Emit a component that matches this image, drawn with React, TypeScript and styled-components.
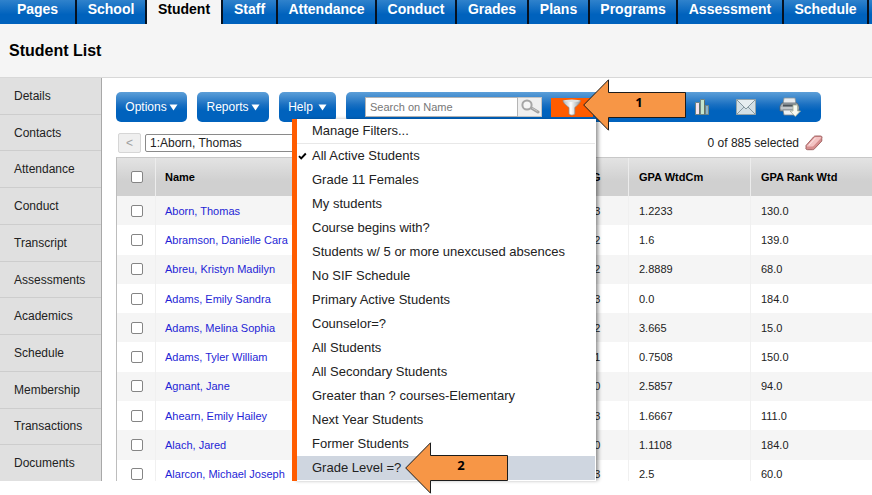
import React from "react";
import styled, { createGlobalStyle } from "styled-components";

const GlobalStyle = createGlobalStyle`
  *, *::before, *::after { box-sizing: border-box; }
  body {
    margin: 0;
    background: #fff;
    color: #222;
    font-family: "Liberation Sans", Arial, sans-serif;
    font-size: 12px;
  }
  button, input, select { font: inherit; }
`;

const blue = "linear-gradient(#5d9fd8 0%, #1a70c2 42%, #0062bd 62%, #0062bd 100%)";

const Page = styled.div`
  display: flex;
  flex-direction: column;
  height: 100vh;
  padding-bottom: 14px;
  overflow: hidden;
`;

const TabBar = styled.nav`
  display: flex;
  flex: none;
  height: 24px;
  background: linear-gradient(#2f82cc 0%, #0062bd 60%);
  overflow: hidden;
`;

const Tab = styled.a<{ $width: number; $active?: boolean }>`
  flex: 0 0 ${(p) => p.$width}px;
  height: 24px;
  padding-bottom: 6px;
  line-height: 18px;
  border-right: 2px solid #06111f;
  background: ${(p) => (p.$active ? "#f5f5f5" : "transparent")};
  color: ${(p) => (p.$active ? "#000" : "#fff")};
  font-size: 14px;
  font-weight: bold;
  text-align: center;
  text-decoration: none;
`;

const TitleBar = styled.header`
  display: flex;
  flex: none;
  align-items: center;
  height: 54px;
  padding: 0 9px;
  background: #f5f5f5;
  border-bottom: 1px solid #d8d8d8;
`;

const Title = styled.h1`
  margin: 0;
  color: #000;
  font-size: 16px;
  line-height: 20px;
`;

const Main = styled.div`
  display: flex;
  flex: 1;
  min-height: 0;
`;

const SideNav = styled.nav`
  display: flex;
  flex: none;
  flex-direction: column;
  width: 102px;
  background: #e0e0e0;
  border-right: 1px solid #a8a8a8;
`;

const SideLink = styled.a`
  display: flex;
  flex: 1;
  align-items: center;
  padding-left: 14px;
  border-bottom: 1px solid #cdcdcd;
  color: #222;
  text-decoration: none;
  &:last-child { border-bottom: 0; }
`;

const Content = styled.main`
  display: flex;
  flex: 1;
  flex-direction: column;
  min-width: 0;
  padding: 14px 0 0 14px;
`;

const Toolbar = styled.div`
  display: flex;
  flex: none;
  gap: 10px;
  padding-right: 51px;
`;

const MenuButton = styled.button<{ $width: number; $gap?: number }>`
  display: flex;
  flex: 0 0 ${(p) => p.$width}px;
  align-items: center;
  justify-content: center;
  gap: ${(p) => p.$gap ?? 2}px;
  height: 30px;
  padding: 0;
  border: 0;
  border-radius: 5px;
  background: ${blue};
  color: #fff;
`;

const ToolStrip = styled.div`
  position: relative;
  display: flex;
  flex: 1;
  align-items: center;
  height: 30px;
  padding-left: 19px;
  border-radius: 5px;
  background: ${blue};
`;

const SearchInput = styled.input`
  width: 153px;
  height: 20px;
  padding: 0 4px;
  border: 1px solid #b5b5b5;
  border-radius: 0;
  background: #fff;
  font-size: 11px;
  &::placeholder { color: #777; opacity: 1; }
`;

const SearchButton = styled.button`
  width: 24px;
  height: 20px;
  padding: 0;
  border: 1px solid #c4c4c4;
  border-left: 0;
  background: #efefef;
  line-height: 0;
`;

const FilterButton = styled.button`
  width: 42px;
  height: 19px;
  margin-left: 9px;
  padding: 0;
  border: 0;
  background: #ff5c00;
  line-height: 0;
`;

const ToolIcons = styled.div`
  display: flex;
  align-items: center;
  gap: 22px;
  margin-left: 98px;
`;

const IconButton = styled.button`
  width: 22px;
  height: 22px;
  padding: 0;
  border: 0;
  background: none;
  line-height: 0;
`;

const Menu = styled.ul`
  position: absolute;
  top: 27px;
  left: -54px;
  z-index: 2;
  width: 304px;
  margin: 0;
  padding: 0 1px 1px 0;
  border-left: 5px solid #ff5c00;
  background: #fff;
  box-shadow: 3px 0 4px -1px rgba(0, 0, 0, 0.45);
  list-style: none;
`;

const MenuRow = styled.li<{ $divided?: boolean; $hover?: boolean }>`
  position: relative;
  height: ${(p) => (p.$divided ? 25 : 24)}px;
  border-bottom: ${(p) => (p.$divided ? "1px solid #e8e8e8" : "0")};
  background: ${(p) => (p.$hover ? "#cfd6e0" : "transparent")};
`;

const MenuItem = styled.button`
  display: flex;
  align-items: center;
  width: 100%;
  height: 24px;
  padding: 0 0 1px;
  border: 0;
  background: none;
  color: #222;
  font-size: 13px;
  text-align: left;
`;

const Tick = styled.span`
  flex: 0 0 15px;
  padding-left: 1px;
  line-height: 0;
`;

const Callout = styled.div<{ $left: number; $top: number }>`
  position: absolute;
  top: ${(p) => p.$top}px;
  left: ${(p) => p.$left}px;
  z-index: 3;
  display: grid;
  width: 104px;
  height: 52px;
  pointer-events: none;
  > * { grid-area: 1 / 1; }
`;

const CalloutText = styled.span`
  padding-left: 8px;
  color: #000;
  font-family: "Open Sans", "Noto Sans", sans-serif;
  font-size: 13px;
  font-weight: bold;
  line-height: 46px;
  text-align: center;
`;

const PickerRow = styled.div`
  display: flex;
  flex: none;
  align-items: center;
  height: 22px;
  margin: 10px 0 3px;
  padding: 0 49px 0 2px;
`;

const PrevButton = styled.button`
  width: 23px;
  height: 20px;
  margin-right: 4px;
  padding: 0;
  border: 1px solid #d6d6d6;
  border-radius: 2px;
  background: #efefef;
  color: #a0a0a0;
`;

const StudentSelect = styled.select`
  width: 260px;
  height: 18px;
  padding: 0 4px;
  border: 1px solid #8a8a8a;
  border-radius: 2px;
  background: #fff;
  color: #222;
  appearance: none;
`;

const Selected = styled.span`
  margin-left: auto;
  margin-right: 6px;
`;

const TableWrap = styled.div`
  flex: 1;
  min-height: 0;
  overflow: hidden;
`;

const Table = styled.table`
  width: 100%;
  height: 332px;
  border-top: 1px solid #c8c8c8;
  border-left: 1px solid #bdbdbd;
  border-spacing: 0;
  table-layout: fixed;
  font-size: 11px;

  th, td { padding: 0 0 0 10px; text-align: left; }
  th {
    height: 38px;
    border-right: 1px solid #ececec;
    background: linear-gradient(#e3e3e3, #d0d0d0 60%);
    color: #000;
  }
  td { height: 29px; border-right: 1px solid #f0f0f0; }
  tbody tr:nth-child(odd) { background: #f5f5f5; }
  th:first-child, td:first-child { padding: 0 0 0 2px; text-align: center; }
  th:nth-child(2), td:nth-child(2) { padding-left: 9px; }
  th:last-child, td:last-child { border-right: 0; }
`;

const Check = styled.input`
  display: block;
  width: 12px;
  height: 12px;
  margin: 0 auto;
  border: 1px solid #858585;
  border-radius: 2px;
  background: #fff;
  appearance: none;
`;

const NameLink = styled.a`
  color: #1f1fd6;
  text-decoration: none;
`;

const tabs: [string, number][] = [
  ["Pages", 77], ["School", 70], ["Student", 76], ["Staff", 55], ["Attendance", 99],
  ["Conduct", 80], ["Grades", 72], ["Plans", 61], ["Programs", 88], ["Assessment", 106],
  ["Schedule", 85],
];

const sideLinks = [
  "Details", "Contacts", "Attendance", "Conduct", "Transcript", "Assessments",
  "Academics", "Schedule", "Membership", "Transactions", "Documents",
];

const filters = [
  "All Active Students", "Grade 11 Females", "My students", "Course begins with?",
  "Students w/ 5 or more unexcused absences", "No SIF Schedule", "Primary Active Students",
  "Counselor=?", "All Students", "All Secondary Students", "Greater than ? courses-Elementary",
  "Next Year Students", "Former Students", "Grade Level =?",
];

const students: [string, string, string, string][] = [
  ["Aborn, Thomas", "2023", "1.2233", "130.0"],
  ["Abramson, Danielle Cara", "2022", "1.6", "139.0"],
  ["Abreu, Kristyn Madilyn", "2022", "2.8889", "68.0"],
  ["Adams, Emily Sandra", "2023", "0.0", "184.0"],
  ["Adams, Melina Sophia", "2022", "3.665", "15.0"],
  ["Adams, Tyler William", "2021", "0.7508", "150.0"],
  ["Agnant, Jane", "2020", "2.5857", "94.0"],
  ["Ahearn, Emily Hailey", "2023", "1.6667", "111.0"],
  ["Alach, Jared", "2020", "1.1108", "184.0"],
  ["Alarcon, Michael Joseph", "2023", "2.5", "60.0"],
];

const Caret = () => (
  <svg width="9" height="8" viewBox="0 0 9 8" aria-hidden="true">
    <path d="M0.5 1.5h8L4.5 7.5z" fill="#fff" />
  </svg>
);

const Arrow = ({ left, top, children }: { left: number; top: number; children: React.ReactNode }) => (
  <Callout $left={left} $top={top}>
    <svg width="104" height="52" viewBox="0 0 104 52" aria-hidden="true">
      <path d="M0.7 26L25.5 0.8V13.5H102.5V38.5H25.5V51.2z" fill="#f79646" stroke="#1c1c1c" />
    </svg>
    <CalloutText>{children}</CalloutText>
  </Callout>
);

const SearchIcon = () => (
  <svg width="20" height="16" viewBox="0 0 20 16" aria-hidden="true">
    <path d="M10.5 8.5L18 13" stroke="#a0a0a0" strokeWidth="3" strokeLinecap="round" />
    <path d="M12 9L17.5 12.3" stroke="#c8c8c8" strokeWidth="1" />
    <circle cx="7" cy="6" r="4.6" fill="#f6f6f6" stroke="#a6a6a6" strokeWidth="2" />
  </svg>
);

const FunnelIcon = () => (
  <svg width="20" height="17" viewBox="0 0 20 17" aria-hidden="true">
    <defs>
      <linearGradient id="funnel" x1="0" x2="1">
        <stop offset="0" stopColor="#a9b0b5" />
        <stop offset="0.45" stopColor="#ffffff" />
        <stop offset="1" stopColor="#8f999f" />
      </linearGradient>
    </defs>
    <path d="M1 1.5C4 2.6 15 2.6 18.5 1.5C18.5 4 15 6.5 12.8 8.5V15C11.5 16.5 8.5 16.5 7 15V8.5C4.5 6.5 1 4 1 1.5z" fill="url(#funnel)" stroke="#8c8f90" strokeWidth="0.7" />
    <ellipse cx="9.8" cy="1.8" rx="8.5" ry="1.2" fill="#dfe4e6" />
  </svg>
);

const ChartIcon = () => (
  <svg width="22" height="22" viewBox="0 0 22 22" aria-hidden="true">
    <g stroke="#6f8584" strokeWidth="1">
      <path d="M4.5 6.5h4v12h-4z" fill="#f6e3ee" />
      <path d="M9.5 3.5h4v15h-4z" fill="#c3e5cd" />
      <path d="M14.5 9.500h3v9h-3z" fill="#8cb3cc" />
    </g>
    <path d="M8.500 7.500v11M13.500 4.500v14" stroke="#5f7168" />
  </svg>
);

const MailIcon = () => (
  <svg width="22" height="22" viewBox="0 0 22 22" aria-hidden="true">
    <path d="M1.5 3.5h19v15h-19z" fill="#d3dfe5" stroke="#94a3a8" />
    <path d="M2 4h18l-9 8.500z" fill="#e6edf0" />
    <path d="M2 4l9 9 9-9M2 18l7-7M20 18l-7-7" fill="none" stroke="#8799a1" />
  </svg>
);

const PrintIcon = () => (
  <svg width="22" height="22" viewBox="0 0 22 22" aria-hidden="true">
    <path d="M5 2h11l1 6H4z" fill="#e9ecee" stroke="#8c9498" strokeWidth="0.8" />
    <path d="M3 7h15l2 3v5H1v-5z" fill="#a9b0b5" stroke="#59636a" strokeWidth="0.8" />
    <path d="M4 8.5h13v2H4z" fill="#4b545b" />
    <path d="M4 14h12l1 5H5z" fill="#eef1f2" stroke="#7d868b" strokeWidth="0.8" />
    <path d="M1.5 12h18" stroke="#d8dcde" />
    <path d="M14 9h4.5v6H21.5L16.3 20.5L11 15H14z" fill="#f8faf0" stroke="#a4ad98" strokeWidth="0.8" />
  </svg>
);

const EraserIcon = () => (
  <svg width="18" height="16" viewBox="0 0 18 16" aria-hidden="true">
    <path d="M1 10.500L8.500 2C9 1.300 9.600 1 10.500 1H15.500C17 1 17.300 2.300 16.800 3.500V6L9.500 13.800C9 14.500 8.500 14.700 7.500 14.700H2.500C1 14.700 0.500 13.500 1 12.500z" fill="#d78f8f" stroke="#9a5b5b" strokeWidth="0.9" />
    <path d="M2 10.800L9.200 2.800C9.700 2.200 10 2 10.700 2H15.300C16 2 16.200 2.600 15.800 3.200L8.800 10.800C8.300 11.300 8 11.500 7.200 11.500H2.500C1.800 11.500 1.600 11.200 2 10.800z" fill="#f3c3c3" />
    <path d="M4 10L10.500 2.800" stroke="#fbe6e6" strokeWidth="1" />
  </svg>
);

const TickIcon = () => (
  <svg width="9" height="8" viewBox="0 0 9 8" aria-hidden="true">
    <path d="M1 4.2L3.2 6.4L7.8 1.5" fill="none" stroke="#000" strokeWidth="1.9" />
  </svg>
);

export default function App() {
  return (
    <Page>
      <GlobalStyle />
      <TabBar aria-label="Main">
        {tabs.map(([name, width]) => (
          <Tab key={name} href="#" $width={width} $active={name === "Student"}>{name}</Tab>
        ))}
      </TabBar>
      <TitleBar><Title>Student List</Title></TitleBar>
      <Main>
        <SideNav aria-label="Student">
          {sideLinks.map((name) => <SideLink key={name} href="#">{name}</SideLink>)}
        </SideNav>
        <Content>
          <Toolbar>
            <MenuButton $width={71}>Options<Caret /></MenuButton>
            <MenuButton $width={72}>Reports<Caret /></MenuButton>
            <MenuButton $width={57} $gap={5}>Help<Caret /></MenuButton>
            <ToolStrip>
              <SearchInput type="text" placeholder="Search on Name" aria-label="Search on Name" />
              <SearchButton aria-label="Search"><SearchIcon /></SearchButton>
              <FilterButton aria-label="Filter"><FunnelIcon /></FilterButton>
              <ToolIcons>
                <IconButton aria-label="Charts"><ChartIcon /></IconButton>
                <IconButton aria-label="Email"><MailIcon /></IconButton>
                <IconButton aria-label="Print"><PrintIcon /></IconButton>
              </ToolIcons>
              <Menu>
                <MenuRow $divided><MenuItem><Tick />Manage Filters...</MenuItem></MenuRow>
                {filters.map((name, i) => (
                  <MenuRow key={name} $hover={i === filters.length - 1}>
                    <MenuItem><Tick>{i === 0 && <TickIcon />}</Tick>{name}</MenuItem>
                    {i === filters.length - 1 && <Arrow left={108} top={-14}>2</Arrow>}
                  </MenuRow>
                ))}
              </Menu>
              <Arrow left={237} top={-13}>1</Arrow>
            </ToolStrip>
          </Toolbar>
          <PickerRow>
            <PrevButton aria-label="Previous student">&lt;</PrevButton>
            <StudentSelect aria-label="Student"><option>1:Aborn, Thomas</option></StudentSelect>
            <Selected>0 of 885 selected</Selected>
            <EraserIcon />
          </PickerRow>
          <TableWrap>
            <Table>
              <colgroup>
                <col width="39" />
                <col />
                <col width="63" />
                <col width="122" />
                <col width="121" />
              </colgroup>
              <thead>
                <tr>
                  <th><Check type="checkbox" aria-label="Select all" /></th>
                  <th>Name</th>
                  <th>YOG</th>
                  <th>GPA WtdCm</th>
                  <th>GPA Rank Wtd</th>
                </tr>
              </thead>
              <tbody>
                {students.map(([name, yog, gpa, rank]) => (
                  <tr key={name}>
                    <td><Check type="checkbox" aria-label={`Select ${name}`} /></td>
                    <td><NameLink href="#">{name}</NameLink></td>
                    <td>{yog}</td>
                    <td>{gpa}</td>
                    <td>{rank}</td>
                  </tr>
                ))}
              </tbody>
            </Table>
          </TableWrap>
        </Content>
      </Main>
    </Page>
  );
}
